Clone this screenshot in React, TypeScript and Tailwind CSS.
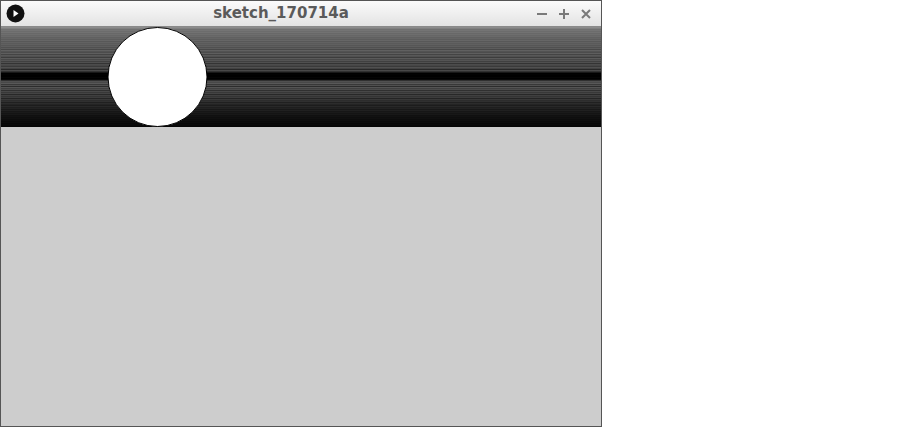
import React from 'react';

// grey level of each row in the striped band (top to bottom, 100 rows)
const rows = [
  0x8c, 0x80,
  0x70, 0x74, 0x6c, 0x72, 0x68, 0x6e, 0x66,
  0x6a, 0x60, 0x64, 0x5c, 0x66, 0x58, 0x62, 0x5a, 0x60, 0x56,
  0x5e, 0x50, 0x5c, 0x48, 0x60, 0x52, 0x4c, 0x5e, 0x44, 0x58,
  0x50, 0x3c, 0x5a, 0x48, 0x54, 0x40, 0x50, 0x34, 0x4c, 0x46,
  0x3a, 0x50, 0x42, 0x28, 0x48, 0x30, 0x18,
  0x00, 0x02, 0x00, 0x00, 0x04, 0x00, 0x08,
  0x30, 0x50, 0x48, 0x58, 0x38, 0x50, 0x2c, 0x54, 0x40, 0x4c, 0x30,
  0x48, 0x38, 0x44, 0x28, 0x40, 0x34, 0x3c, 0x24, 0x38, 0x2c, 0x30, 0x20, 0x2c, 0x24, 0x1c,
  0x28, 0x1e, 0x22, 0x18, 0x20, 0x16, 0x1a, 0x14, 0x18, 0x10, 0x12, 0x0e, 0x10, 0x0c, 0x0e,
  0x0a, 0x0c, 0x08, 0x0a, 0x08, 0x06,
];

const grey = (v: number) => `rgb(${v},${v},${v})`;

function Sketch() {
  return (
    <svg width={600} height={399} viewBox="0 0 600 399" className="block">
      <rect x={0} y={0} width={600} height={399} fill="#cdcdcd" />
      {rows.map((v, i) => (
        <rect key={i} x={0} y={i} width={600} height={1} fill={grey(v)} />
      ))}
      <circle cx={156.5} cy={50} r={49.5} fill="#fff" stroke="#000" strokeWidth={1} />
    </svg>
  );
}

export default function App() {
  return (
    <div className="h-[427px] w-[903px] bg-white" style={{ fontFamily: '"DejaVu Sans", sans-serif' }}>
      <div className="w-[602px] border border-[#555]">
        <div className="flex h-[26px] items-center border-b border-[#8a8a8a] bg-gradient-to-b from-[#fbfbfb] to-[#e3e3e3]">
          <div className="flex w-[30px] justify-center">
            <svg width={19} height={19} viewBox="0 0 19 19" className="ml-[-1px]">
              <circle cx={9.5} cy={9.5} r={9} fill="#111" />
              <path d="M7.5 6 L12.5 9.5 L7.5 13 Z" fill="#fff" />
            </svg>
          </div>
          <div className="flex-1 pr-[4px] text-center text-[15px] font-bold text-[#5a5a5a]">sketch_170714a</div>
          <div className="flex items-center gap-[8px] pr-[8px]">
            <svg width={14} height={14} viewBox="0 0 14 14">
              <path d="M2 7 H12" stroke="#7a7a7a" strokeWidth={2} />
            </svg>
            <svg width={14} height={14} viewBox="0 0 14 14">
              <path d="M2 7 H12 M7 2 V12" stroke="#7a7a7a" strokeWidth={2} />
            </svg>
            <svg width={14} height={14} viewBox="0 0 14 14">
              <path d="M3 3 L11 11 M11 3 L3 11" stroke="#7a7a7a" strokeWidth={2} />
            </svg>
          </div>
        </div>
        <Sketch />
      </div>
    </div>
  );
}
